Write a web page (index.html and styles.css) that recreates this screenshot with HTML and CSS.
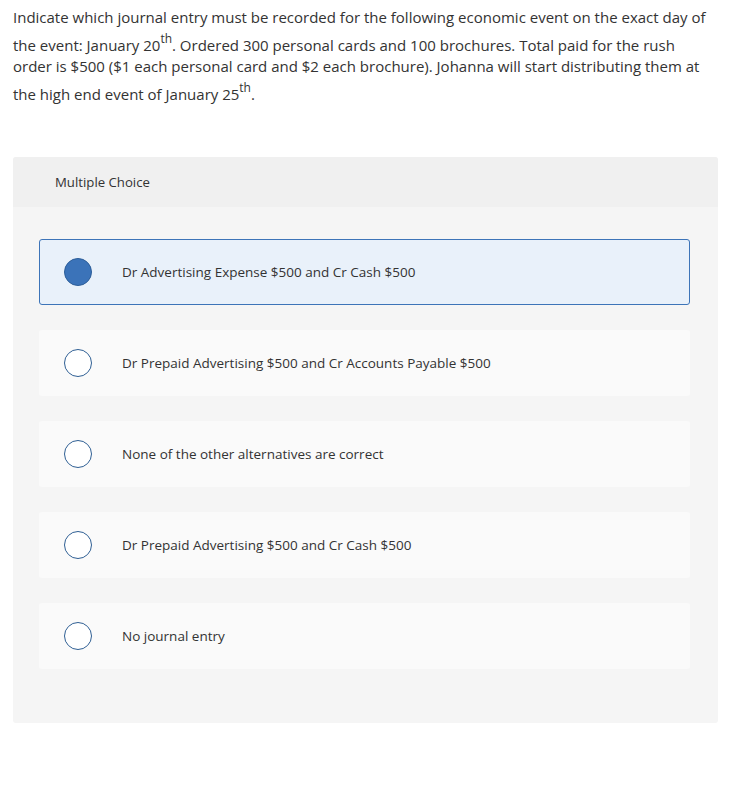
FILE: index.html
```html
<!DOCTYPE html>
<html>
<head>
<meta charset="utf-8">
<link rel="stylesheet" href="styles.css">
</head>
<body>
<p class="prompt">Indicate which journal entry must be recorded for the following economic event on the exact day of the event: January 20<sup>th</sup>. Ordered 300 personal cards and 100 brochures. Total paid for the rush order is $500 ($1 each personal card and $2 each brochure). Johanna will start distributing them at the high end event of January 25<sup>th</sup>.</p>
<div class="panel">
  <div class="panel-head">Multiple Choice</div>
  <div class="panel-body">
    <div class="option selected"><span class="radio"></span><span class="label">Dr Advertising Expense $500 and Cr Cash $500</span></div>
    <div class="option"><span class="radio"></span><span class="label">Dr Prepaid Advertising $500 and Cr Accounts Payable $500</span></div>
    <div class="option"><span class="radio"></span><span class="label">None of the other alternatives are correct</span></div>
    <div class="option"><span class="radio"></span><span class="label">Dr Prepaid Advertising $500 and Cr Cash $500</span></div>
    <div class="option"><span class="radio"></span><span class="label">No journal entry</span></div>
  </div>
</div>
</body>
</html>
```
FILE: styles.css
```css
html, body { margin: 0; padding: 0; background: #fff; }
body {
  font-family: "Open Sans", "Liberation Sans", sans-serif;
  color: #333;
  padding: 0 13px;
}
.prompt {
  margin: 7px 0 0 0;
  max-width: 700px;
  font-size: 15px;
  line-height: 21px;
  color: #333;
}
.prompt sup { font-size: 12px; line-height: 22px; vertical-align: 8px; }
.panel {
  margin-top: 52px;
  width: 705px;
  background: #f5f5f5;
  border-radius: 3px;
  overflow: hidden;
}
.panel-head {
  height: 50px;
  background: #f0f0f0;
  display: flex;
  align-items: center;
  padding-left: 42px;
  font-size: 13.2px;
  color: #333;
}
.panel-body {
  padding: 32px 28px 54px 26px;
  display: flex;
  flex-direction: column;
  gap: 25px;
}
.option {
  height: 66px;
  box-sizing: border-box;
  background: #fafafa;
  border-radius: 3px;
  display: flex;
  align-items: center;
  padding-left: 25px;
}
.option.selected {
  background: #e9f1fa;
  border: 1px solid #3d74b8;
  padding-left: 24px;
}
.radio {
  width: 28px;
  height: 28px;
  box-sizing: border-box;
  border-radius: 50%;
  border: 1.5px solid #2f5f94;
  background: #fff;
  flex: none;
}
.selected .radio { background: #3b73b9; border-color: #2d5e99; }
.label {
  margin-left: 30px;
  font-size: 13.5px;
  color: #333;
}
```
